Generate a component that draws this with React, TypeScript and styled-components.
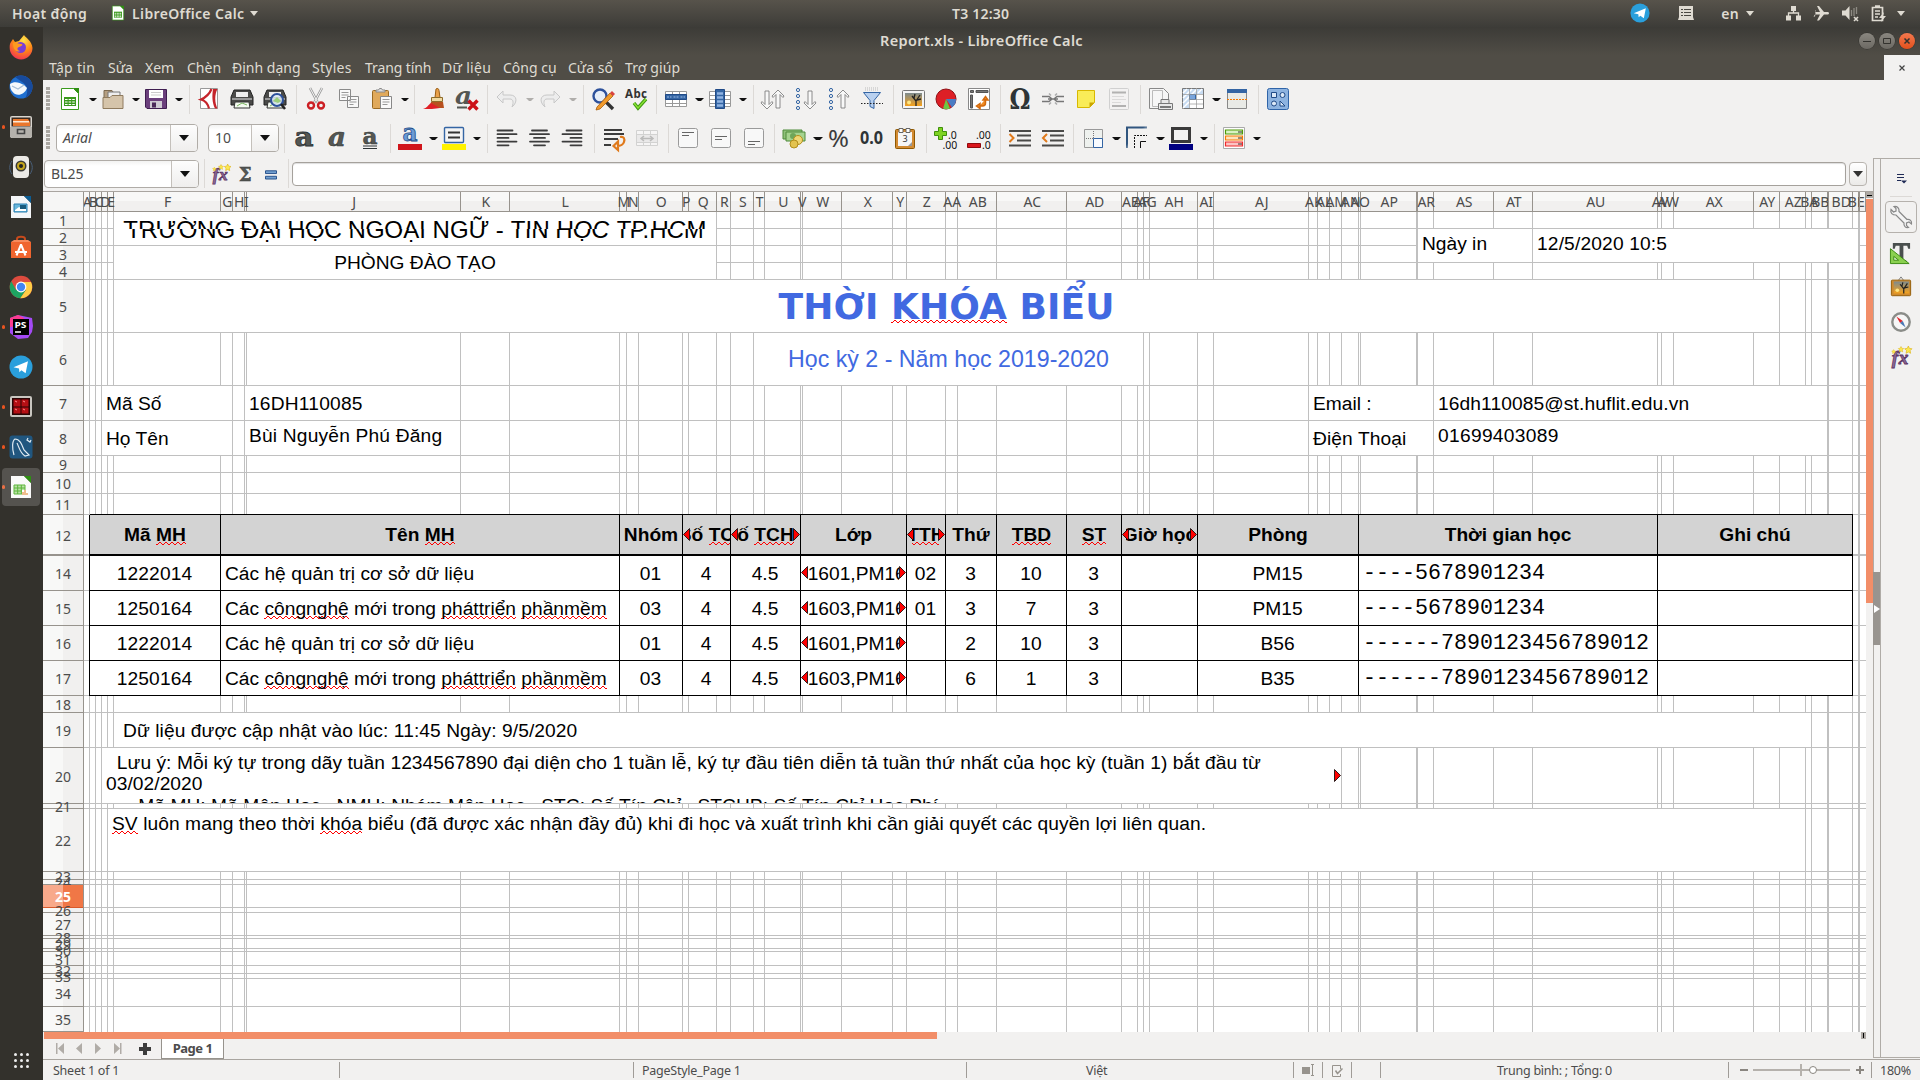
import React from "react";
import styled, { createGlobalStyle } from "styled-components";

const UI = `"Noto Sans", "Open Sans", sans-serif`;
const ARIAL = `"Liberation Sans", Arial, sans-serif`;
const MONO = `"Liberation Mono", "Courier New", monospace`;

const GlobalStyle = createGlobalStyle`
  * { box-sizing: border-box; }
  body { margin: 0; background: #f2f1f0; overflow: hidden; }
`;

/* ---------- icons ---------- */

const Sheet = ({ x = 3 }: { x?: number }) => (
  <>
    <path d={`M${x + 0.5} 1.5h12l5 5v16h-17z`} fill="#fff" stroke="#3a9a1c" />
    <path d={`M${x + 12} 1h6v6z`} fill="#2f8f12" />
    <path d={`M${x + 3} 10h12v9h-12z`} fill="#3a9a1c" />
    <path d={`M${x + 4} 12.5h10M${x + 4} 15h10M${x + 4} 17.5h10`} stroke="#fff" strokeWidth="1.2" strokeDasharray="2.6 1" />
  </>
);
const TableLines = () => (
  <>
    <path d="M1.500 4.500h21v15h-21z" fill="#fff" stroke="#999" />
    <path d="M1.500 8.500h21M1.500 12.500h21M1.500 16.500h21M8.500 4.500v15M15.500 4.500v15" stroke="#999" fill="none" />
  </>
);
const Lines = ({ a }: { a: "l" | "c" | "r" }) => (
  <g stroke="#3c3c3c" strokeWidth="1.8" strokeLinecap="round">
    {[16, 20, 12, 20, 12].map((w, i) => {
      const x = a === "l" ? 2.5 : a === "c" ? 12 - w / 2 : 21.500 - w;
      return <path key={i} d={`M${x} ${4.500 + i * 3.7}h${w - 1}`} />;
    })}
  </g>
);
const Box = ({ y }: { y: number }) => (
  <>
    <rect x="2.500" y="2.500" width="19" height="19" rx="2" fill="#f8f8f8" stroke="#9a9a9a" />
    <path d={`M6 ${y + 0.5}h12M6 ${y + 3.5}h7`} stroke="#666" />
  </>
);
const Printer = () => (
  <>
    <path d="M4 3h16l3 7v8H1v-8z" fill="#4a4a48" stroke="#222" />
    <path d="M6 5h12v5H6z" fill="#eee" />
    <path d="M2 11h20v2H2z" fill="#999" />
    <path d="M5 15h14l1 6H4z" fill="#f4faf0" stroke="#333" />
    <path d="M7 19l5-3 5 2" stroke="#7bb661" fill="none" />
  </>
);
const UpArrow = ({ x, down = false }: { x: number; down?: boolean }) => (
  <path
    transform={down ? `translate(${x} 23) scale(1 -1)` : `translate(${x} 2)`}
    d="M0 7l6-6 6 6-1 1.500-3-3v13.500h-4V5.500l-3 3z"
    fill="#f8f8f8"
    stroke="#808080"
    strokeWidth=".9"
  />
);
const Star = ({ x, y, r }: { x: number; y: number; r: number }) => (
  <path
    transform={`translate(${x} ${y}) scale(${r})`}
    d="M0-1l.3.65.7.1-.5.5.12.75L0 .65l-.62.35.12-.75-.5-.5.7-.1z"
    fill="#fce94f"
    stroke="#d8a800"
    strokeWidth=".15"
  />
);
const FxMark = () => (
  <>
    <text x="2" y="19.500" fontFamily="Liberation Serif, serif" fontStyle="italic" fontWeight="700" fontSize="21" fill="#8d6a94" stroke="#5c3566" strokeWidth=".9" textLength="18">fx</text>
    <Star x={4} y={6} r={2.2} />
    <Star x={12} y={3.5} r={3} />
    <Star x={20} y={4} r={4} />
  </>
);
const Photo = () => (
  <>
    <defs>
      <linearGradient id="sunset" x1="0" y1="0" x2="0" y2="1">
        <stop offset="0" stopColor="#7d8b8e" />
        <stop offset="1" stopColor="#f5a11c" />
      </linearGradient>
    </defs>
    <rect x="4" y="6" width="17" height="13" fill="url(#sunset)" />
    <circle cx="8" cy="15.500" r="2" fill="#ffe680" />
    <path d="M15 19v-5l-4-5M15 14l4-6M16 13l4-1M13 11l1-4" stroke="#222" strokeWidth="1.300" fill="none" />
  </>
);
const PaperPlane = () => <path d="M4.500 12.200L19 6.200 16.600 18.300l-4.200-3.100-2 2-.4-3.600z" fill="#fff" />;

const ICONS: Record<string, React.ReactNode> = {
  calc: <Sheet />,
  calcdock: (
    <>
      <path d="M2 1h13l7 7v15H2z" fill="#fafafa" />
      <path d="M15 1h7v7z" fill="#2f8f12" />
      <path d="M5 10h11v9H5z" fill="#b9e2a6" />
      <path d="M5 10h11v9H5zM5 13h11M5 16h11M8.700 10v9M12.300 10v9" stroke="#5cb53a" fill="none" />
      <path d="M13 15h6v5h-6z" fill="#fff" />
      <path d="M14 20v-3M16 20v-5M18 20v-2" stroke="#e07a1c" />
    </>
  ),
  open: (
    <>
      <path d="M3 3.500h8l2 3h5v14H3z" fill="#b59f82" stroke="#7d6a50" />
      <path d="M7 5h12v8H7z" fill="#eee" stroke="#777" />
      <path d="M2 10.500h7l2-2h11v13H2z" fill="#d5c4aa" stroke="#8f7b5e" />
    </>
  ),
  save: (
    <>
      <path d="M1.500 2.500h21v19H3l-1.500-1.500z" fill="#6b3f7c" stroke="#3f1d50" />
      <path d="M5 3h14v8H5z" fill="#fff" />
      <path d="M7 5.500h10M7 8h10" stroke="#ccc" />
      <path d="M6 14h12v7H6z" fill="#cfcbd3" />
      <path d="M8 15.500h4v5H8z" fill="#4b2a5a" />
    </>
  ),
  pdf: (
    <>
      <path d="M3.500 1.500h17v20h-17z" fill="#fff" stroke="#999" />
      <path d="M16 2h4.500c-3 5-3 14 0 19.500h-2.500c-3-6-3-13-2-19.500z" fill="#c5242b" />
      <path d="M14.500 2c-2 5-5 8-10.500 10.500 4 1 7 5 8 9" stroke="#c5242b" strokeWidth="2.200" fill="none" />
    </>
  ),
  print: <Printer />,
  preview: (
    <>
      <Printer />
      <circle cx="14" cy="13" r="6" fill="#dce9f5" fillOpacity=".85" stroke="#2d519b" strokeWidth="2" />
      <path d="M18 17l4 5" stroke="#222" strokeWidth="2.500" />
      <path d="M10 14l4-4 4 4-3 2z" fill="#9bcf7b" />
    </>
  ),
  cut: (
    <>
      <path d="M6 1l8 15M18 1l-8 15" stroke="#999" strokeWidth="2.600" />
      <path d="M6 1l8 15M18 1l-8 15" stroke="#f5f5f5" strokeWidth="1" />
      <circle cx="7" cy="18.500" r="3" fill="none" stroke="#cc1f24" strokeWidth="2.400" />
      <circle cx="17" cy="18.500" r="3" fill="none" stroke="#cc1f24" strokeWidth="2.400" />
    </>
  ),
  copy: (
    <>
      <path d="M2.500 2.500h11v11h-11zM10.500 9.500h11v11h-11z" fill="#f9f9f9" stroke="#8a8a8a" />
      <path d="M4.500 5.500h7M4.500 8h7M4.500 10.500h4M12.500 12.500h7M12.500 15h7M12.500 17.500h4" stroke="#999" />
    </>
  ),
  paste: (
    <>
      <rect x="2.500" y="3.500" width="16" height="18" rx="1" fill="#e0a95b" stroke="#9a6a22" />
      <path d="M6 5V3h2.500l1-1.500h2l1 1.500H15v2z" fill="#ddd" stroke="#888" />
      <path d="M10.500 9.500h11v12h-11z" fill="#fafafa" stroke="#888" />
      <path d="M12.500 12.500h7M12.500 15h7M12.500 17.500h5" stroke="#999" />
    </>
  ),
  brush: (
    <>
      <path d="M14 2c1-1 3-.5 3 1.500l1 7h-5z" fill="#e9a14a" stroke="#9a5c12" />
      <path d="M9.500 10.500h11v4h-11z" fill="#f0d9a0" stroke="#8f6c2a" />
      <path d="M9 15h12l1 6H8z" fill="#b8501e" />
      <path d="M1 22c4-1 5-4 8-6l9 5c-5 1-11 1-17 1z" fill="#e01f26" />
    </>
  ),
  clear: (
    <>
      <text x="0" y="17" fontFamily="DejaVu Serif, serif" fontStyle="italic" fontWeight="700" fontSize="25" fill="#555753" textLength="17" lengthAdjust="spacingAndGlyphs">a</text>
      <path d="M2 20.500h10" stroke="#555753" strokeWidth="2" />
      <path d="M13.500 13.500l9 9M22.500 13.500l-9 9" stroke="#cc1118" strokeWidth="3.400" />
    </>
  ),
  undo: <path d="M8 4L2 10l6 6v-4h7c3 0 4 3 2 8 6-5 5-12-2-12H8z" fill="#ededed" stroke="#c8c8c8" />,
  redo: <path d="M16 4l6 6-6 6v-4H9c-3 0-4 3-2 8-6-5-5-12 2-12h7z" fill="#ededed" stroke="#c8c8c8" />,
  find: (
    <>
      <circle cx="9" cy="9" r="6.500" fill="#e6eef8" stroke="#2d519b" strokeWidth="2.400" />
      <path d="M14 14l8 8" stroke="#333" strokeWidth="3.400" />
      <path d="M6 20L19 6l3 3L9 22l-4 1z" fill="#f09a2c" stroke="#a85d0c" strokeWidth=".8" />
      <path d="M19 6l2-2 3 3-2 2z" fill="#d9433f" />
    </>
  ),
  spell: (
    <>
      <text x="1" y="10.500" fontFamily="Noto Sans, sans-serif" fontWeight="700" fontSize="11.500" fill="#333" textLength="22">Abc</text>
      <path d="M10 16l4 5 8-9" stroke="#3f9a11" strokeWidth="3.400" fill="none" />
      <path d="M10 16l4 5 8-9" stroke="#8ae234" strokeWidth="1.400" fill="none" />
    </>
  ),
  row: (
    <>
      <TableLines />
      <path d="M1.500 7.500h21v5h-21z" fill="#3465a4" stroke="#204a87" />
      <path d="M3 10h4.500M9.500 10h5M16.500 10h4.500" stroke="#9dbde6" strokeDasharray="2 1" />
    </>
  ),
  col: (
    <>
      <TableLines />
      <path d="M7.500 2.500h9v19h-9z" fill="#3465a4" stroke="#204a87" />
      <path d="M9 6.500h6M9 10.500h6M9 14.500h6M9 18.500h6" stroke="#8fb3e2" strokeWidth="2.400" />
    </>
  ),
  sort: (
    <>
      <UpArrow x={0} down />
      <UpArrow x={11} />
    </>
  ),
  asc: (
    <>
      <g fill="none" stroke="#3465a4">{[3, 9, 15, 21].map((y) => <circle key={y} cx="4" cy={y} r="1.600" />)}</g>
      <UpArrow x={10} down />
    </>
  ),
  desc: (
    <>
      <g fill="none" stroke="#3465a4">{[3, 9, 15, 21].map((y) => <circle key={y} cx="4" cy={y} r="1.600" />)}</g>
      <UpArrow x={10} />
    </>
  ),
  filter: (
    <>
      <path d="M5 1h14M5 3h14" stroke="#bbb" strokeDasharray="1 1" />
      <path d="M3.500 5.500h17l-6.500 8v8l-4-2v-6z" fill="#b8d0ef" stroke="#3465a4" />
      <path d="M1 16.500h22" stroke="#222" strokeDasharray="1.500 1.500" />
    </>
  ),
  image: (
    <>
      <rect x="1.500" y="3.500" width="22" height="18" rx="1" fill="#f4f4f4" stroke="#777" />
      <Photo />
    </>
  ),
  chart: (
    <>
      <circle cx="12" cy="12" r="10" fill="#dd1f26" stroke="#8f1014" />
      <path d="M12 12h10a10 10 0 0 1-4 8.500z" fill="#4a7cc4" />
      <path d="M12 12l4 9.500a10 10 0 0 1-7 0z" fill="#6cc644" />
    </>
  ),
  pivot: (
    <>
      <path d="M1.500 1.500h21v21h-21z" fill="#fff" stroke="#888" />
      <path d="M3.500 3.500h3v2h-3zM9 3.500h12v2H9zM3.500 8h2v13h-2z" fill="#777" stroke="#555" />
      <path d="M18.500 12v4c0 2-1 3-3 3h-3M16 13l2.500-3.500L21 13zM13 16.500L9.500 19l3.500 2.500z" fill="#f08c24" stroke="#d46a0c" strokeWidth="1.500" />
    </>
  ),
  omega: <text x="1.500" y="21.500" fontFamily="DejaVu Serif, serif" fontWeight="700" fontSize="27" fill="#2e3436" textLength="21" lengthAdjust="spacingAndGlyphs">Ω</text>,
  link: (
    <g fill="none" stroke="#777" strokeWidth="1.500">
      <path d="M1 9.500h7l3 2.500-3 2.500H1M23 9.500h-7l-3 2.500 3 2.500h7M7 12h10" />
      <path d="M8 6.500l2 2M16 6.500l-2 2M8 17.500l2-2M16 17.500l-2-2" stroke="#aaa" />
    </g>
  ),
  note: (
    <>
      <path d="M3.500 3.500h17v12l-5 5h-12z" fill="#f9ec58" stroke="#d8b800" />
      <path d="M20.500 15.500h-5v5z" fill="#c9a400" />
    </>
  ),
  header: (
    <g opacity=".6">
      <rect x="2.500" y="1.500" width="19" height="21" rx="1" fill="#f4f4f4" stroke="#bbb" />
      <path d="M5 5.500h14M5 19h14" stroke="#888" strokeWidth="2" />
      <path d="M5 9.500h12M5 12.500h14M5 15.500h9" stroke="#ccc" />
    </g>
  ),
  printarea: (
    <>
      <path d="M1.500 1.500h14l5 5v15h-19z" fill="#f6f6f6" stroke="#888" />
      <path d="M4.500 3.500h10v16h-10z" fill="none" stroke="#bbb" />
      <path d="M13 12.500h8v4h-8zM10.500 16.500h14v6h-14z" fill="#e8e8e8" stroke="#777" />
      <path d="M12 20h11" stroke="#555" strokeWidth="1.500" />
    </>
  ),
  freeze: (
    <>
      <path d="M1.500 1.500h21v20h-21z" fill="#fff" stroke="#777" />
      <path d="M2 2h20v5H8v14H2z" fill="#c8dcf2" />
      <path d="M2 6l4-4M2 11l9-9M2 16L16 2M2 21l6-6M12 6l4-4M17 6l4-4" stroke="#fff" strokeWidth="1.500" />
      <path d="M8.500 7.500h6v5h-6z" fill="#7aa5dc" stroke="#3465a4" />
      <path d="M8.500 2v19M15.500 2v19M2 7.500h20M8.500 12.500H22M8.500 17H22" stroke="#999" strokeOpacity=".7" fill="none" />
    </>
  ),
  split: (
    <>
      <path d="M2.500 2.500h19v19h-19z" fill="#e9eae6" stroke="#888" />
      <path d="M2 2h20v4H2z" fill="#3465a4" />
      <path d="M2 12.500h20" stroke="#f57900" strokeDasharray="2 1" />
    </>
  ),
  draw: (
    <>
      <rect x="1.500" y="1.500" width="21" height="21" rx="2" fill="#8db3e0" stroke="#2f64a8" />
      <g fill="#dce9f7" stroke="#204a87">
        <path d="M5.500 5.500h5v5h-5zM14 19V14l5 5z" />
        <circle cx="16.500" cy="8" r="2.500" />
        <circle cx="8" cy="16.500" r="2.500" />
      </g>
    </>
  ),
  bold: <text x="2.500" y="19.500" fontFamily="DejaVu Serif, serif" fontWeight="700" fontSize="26" fill="#555753" stroke="#2e3436" strokeWidth=".8" textLength="19" lengthAdjust="spacingAndGlyphs">a</text>,
  italic: <text x="3" y="19.500" fontFamily="DejaVu Serif, serif" fontWeight="700" fontStyle="italic" fontSize="26" fill="#555753" stroke="#2e3436" strokeWidth=".5" textLength="18" lengthAdjust="spacingAndGlyphs">a</text>,
  under: (
    <>
      <text x="4.500" y="18" fontFamily="DejaVu Serif, serif" fontWeight="700" fontSize="23" fill="#555753" stroke="#2e3436" strokeWidth=".5" textLength="15" lengthAdjust="spacingAndGlyphs">a</text>
      <path d="M5 20h14M5 22.500h14" stroke="#2e3436" strokeWidth="1.200" />
    </>
  ),
  fontcolor: (
    <>
      <text x="4.500" y="15" fontFamily="DejaVu Serif, serif" fontWeight="700" fontSize="25" fill="#6b9bd6" stroke="#204a87" strokeWidth=".8" textLength="15" lengthAdjust="spacingAndGlyphs">a</text>
      <path d="M0 18h24v6H0z" fill="#d0151b" />
    </>
  ),
  highlight: (
    <>
      <rect x="2.500" y="1.500" width="19" height="15" rx="1" fill="#f4f4f4" stroke="#3465a4" strokeWidth="1.400" />
      <path d="M6 6.500h12M6 11.500h12" stroke="#333" strokeWidth="2" />
      <path d="M0 18h24v6H0z" fill="#fff200" />
    </>
  ),
  left: <Lines a="l" />,
  center: <Lines a="c" />,
  right: <Lines a="r" />,
  wrap: (
    <>
      <path d="M2 4h18M2 8h20M2 13h14M2 19h7" stroke="#3c3c3c" strokeWidth="2" />
      <path d="M18 11c4-1 5 2 4 5s-4 4-7 4M16 15.500L11.500 20l4.500 4z" fill="none" stroke="#e07a1c" strokeWidth="2.200" />
    </>
  ),
  merge: (
    <g opacity=".35">
      <TableLines />
      <path d="M2 9h20v7H2z" fill="#ddd" />
      <path d="M6 12.500h12M9 10l-3 2.500L9 15M15 10l3 2.500L15 15" stroke="#555" strokeWidth="1.500" fill="none" />
    </g>
  ),
  vtop: <Box y={6} />,
  vmid: <Box y={10} />,
  vbot: <Box y={15} />,
  currency: (
    <>
      <path d="M1 4h19v9H1z" fill="#8fc07a" stroke="#4e8a3a" />
      <path d="M4 6h19v9H4z" fill="#a5d38f" stroke="#4e8a3a" />
      <circle cx="11" cy="10" r="3" fill="#6fa659" />
      <circle cx="16" cy="14" r="4.500" fill="#f0d774" stroke="#b28f1c" />
      <circle cx="12" cy="18" r="4" fill="#e3c34f" stroke="#b28f1c" />
    </>
  ),
  percent: <text x="1" y="20.500" fontFamily="Noto Sans, sans-serif" fontSize="23" fill="#3c3c3c" textLength="21" lengthAdjust="spacingAndGlyphs">%</text>,
  number: <text x="0" y="17.500" fontFamily="Noto Sans, sans-serif" fontWeight="700" fontSize="17" fill="#2e3436" textLength="23" lengthAdjust="spacingAndGlyphs">0.0</text>,
  date: (
    <>
      <rect x="2.500" y="3.500" width="19" height="19" rx="1" fill="#d38b33" stroke="#8f5902" />
      <path d="M5 6h14v14H5z" fill="#f6f6f6" />
      <path d="M6 2.500h4v4H6zM13 2.500h4v4h-4z" fill="#fff" stroke="#666" />
      <text x="9.500" y="16" fontFamily="Noto Sans, sans-serif" fontSize="9" fill="#333">3</text>
      <path d="M19 16v4h-4z" fill="#999" />
    </>
  ),
  adddec: (
    <>
      <path d="M4.500 1.500h4v4h4v4h-4v4h-4v-4h-4v-4h4z" fill="#7ed321" stroke="#3f8f0a" />
      <text x="14" y="13" fontFamily="Noto Sans, sans-serif" fontSize="10.500" fill="#111">.0</text>
      <text x="8.500" y="23" fontFamily="Noto Sans, sans-serif" fontSize="10.500" fill="#111">.00</text>
    </>
  ),
  deldec: (
    <>
      <text x="9" y="13" fontFamily="Noto Sans, sans-serif" fontSize="10.500" fill="#111">.00</text>
      <text x="15" y="23" fontFamily="Noto Sans, sans-serif" fontSize="10.500" fill="#111">.0</text>
      <path d="M.5 17.500h13v4H.5z" fill="#d9151b" stroke="#8f0a0e" />
    </>
  ),
  indent: (
    <>
      <path d="M1 5h22M9 9.500h14M9 14.500h14M1 19.500h22" stroke="#4a4a48" strokeWidth="2.200" />
      <path d="M1.500 8l4 4-4 4" stroke="#e07a1c" strokeWidth="2" fill="none" />
    </>
  ),
  outdent: (
    <>
      <path d="M1 5h22M9 9.500h14M9 14.500h14M1 19.500h22" stroke="#4a4a48" strokeWidth="2.200" />
      <path d="M6 8l-4 4 4 4" stroke="#e07a1c" strokeWidth="2" fill="none" />
    </>
  ),
  borders: (
    <>
      <path d="M3.500 3.500h18v18h-18z" fill="#eef1ee" stroke="#999" />
      <path d="M12.500 5v7M5 12.500h7" stroke="#777" strokeDasharray="1 1" />
      <path d="M12.500 12.500h9v9h-9z" fill="#f8fbff" stroke="#3465a4" />
    </>
  ),
  bstyle: (
    <>
      <defs>
        <linearGradient id="fade" x1="0" y1="0" x2="1" y2="1">
          <stop offset=".4" stopColor="#31567f" />
          <stop offset=".7" stopColor="#31567f" stopOpacity="0" />
        </linearGradient>
      </defs>
      <path d="M2 22V1.500h20" fill="none" stroke="url(#fade)" strokeWidth="2" />
      <path d="M9.500 22V9.500H22" fill="none" stroke="#111" strokeDasharray="2 1" />
      <path d="M15.500 22v-6.500H21" fill="none" stroke="#111" />
    </>
  ),
  bcolor: (
    <>
      <path d="M3.500 2.500h17v13h-17z" fill="#f2f2f2" stroke="#3a3a3a" strokeWidth="3" />
      <path d="M0 18h24v6H0z" fill="#000080" />
    </>
  ),
  cond: (
    <>
      <path d="M1.500 1.500h21v21h-21z" fill="#fff" stroke="#aaa" />
      <path d="M3.500 4h17v4h-17z" fill="#d9f2c4" stroke="#4e9a06" strokeWidth="1.200" />
      <path d="M3.500 10h17v4h-17z" fill="#fde3bd" stroke="#f57900" strokeWidth="1.200" />
      <path d="M3.500 16h17v4h-17z" fill="#fbc4c4" stroke="#ef2929" strokeWidth="1.200" />
      <path d="M16 6h4M16 12h4M16 18h4" stroke="#333" />
    </>
  ),
  fx: <FxMark />,
  sigma: <text x="4" y="20" fontFamily="DejaVu Serif, serif" fontWeight="700" fontSize="20" fill="#555753" stroke="#2e3436" strokeWidth=".4">Σ</text>,
  equals: <path d="M6 8.500h12v3H6zM6 14.500h12v3H6z" fill="#729fcf" stroke="#204a87" />,
  sidemenu: (
    <>
      <path d="M8 8.500h7M8 11.500h7M8 14.500h4" stroke="#1f2a55" strokeWidth="1.200" />
      <path d="M12 14.500h6l-3 3z" fill="#1f2a55" />
    </>
  ),
  wrench: (
    <path
      d="M5 1.500c3-.5 5.500 1.500 5 5l8 8c3-.5 5 1.500 4.500 4.500l-2.500-2-2.500 1v2.500l2 2c-3 .500-5-1.500-4.500-4.500l-8-8c-3.500 0-6-2-5-5.500l2.500 2.500 2.500-1V3.500z"
      fill="#f4f4f4"
      stroke="#888"
      strokeWidth="1.200"
    />
  ),
  styles: (
    <>
      <path d="M4 1h18v6h-2l-1-3h-4v15h3v2H8v-2h3V4H7L6 7H4z" fill="#4a4f4e" />
      <path d="M1.500 7v15.500H21z" fill="#8ad04f" stroke="#3c8a12" />
      <path d="M5 15v4h5z" fill="#eaf7df" stroke="#3c8a12" />
    </>
  ),
  gallery: (
    <>
      <path d="M9 5l3-4 3 4" fill="none" stroke="#777" />
      <rect x="1.500" y="4.500" width="21" height="17" rx="1" fill="#cf8a2e" stroke="#8f5902" />
      <Photo />
    </>
  ),
  compass: (
    <>
      <circle cx="12" cy="12" r="9.500" fill="#f6f6f6" stroke="#8a8c88" strokeWidth="2.600" />
      <path d="M7 6l7 5-3 2z" fill="#e0242a" />
      <path d="M17 18l-6-5 3-2z" fill="#4a78b5" />
    </>
  ),
  firefox: (
    <>
      <defs>
        <radialGradient id="ff" cx=".6" cy=".2" r=".9">
          <stop offset="0" stopColor="#ffe14a" />
          <stop offset=".5" stopColor="#ff8a16" />
          <stop offset="1" stopColor="#f0245e" />
        </radialGradient>
      </defs>
      <path d="M2 7l2-3 2 3 4-1 5-6c2 3 8 6 8.500 13a11.300 11.300 0 0 1-22.800 0c0-3 0-4 1.300-6z" fill="url(#ff)" />
      <circle cx="11.500" cy="12.500" r="5.500" fill="#7a3fd6" />
      <path d="M4 8c4-1 6 1 8 1s2 2-2 3c-3 1-1 4 1 4-4 2-7-2-7-8z" fill="#ff9a1f" />
    </>
  ),
  thunderbird: (
    <>
      <circle cx="12" cy="12" r="11.500" fill="#1f6fd0" />
      <path d="M6 2c8-4 17 1 17.500 9 0 6-3 10-7 12 3-6 2-12-2-15z" fill="#174a9c" />
      <path d="M1 9c4-3 9-2 14 1l3 3c-2 6-8 8-12 6-3-2-5-5-5-10z" fill="#f4f8fc" />
      <path d="M3 11l6 3 6-4" fill="none" stroke="#a7bed6" strokeWidth="1.200" />
    </>
  ),
  files: (
    <>
      <rect x="1" y="1" width="22" height="22" rx="2" fill="#d9d6d0" />
      <path d="M2.500 2.500h19v9h-19z" fill="#3a2a20" />
      <path d="M4 4h15l2 3v4H4z" fill="#e9762b" />
      <path d="M4 6h16v1.500H4z" fill="#fbe9d6" />
      <path d="M1 12h22v9l-2 2H3l-2-2z" fill="#b5b2ac" />
      <path d="M8.500 14.500h7v4h-7z" fill="none" stroke="#444" strokeWidth="1.600" />
    </>
  ),
  rhythmbox: (
    <>
      <rect x="4" y="1" width="16" height="22" rx="4" fill="#eceae6" />
      <path d="M3 6c-3 4-3 9 0 13M21 6c3 4 3 9 0 13" stroke="#4a607a" fill="none" />
      <circle cx="12" cy="11" r="5.500" fill="#3b3b36" />
      <circle cx="12" cy="11" r="4" fill="#c4a51c" />
      <circle cx="12" cy="11" r="2" fill="#222" />
    </>
  ),
  impress: (
    <>
      <path d="M2 1h13l7 7v15H2z" fill="#f4f6f8" />
      <path d="M15 1h7v7z" fill="#0d5d93" />
      <path d="M5 9h13v8H5z" fill="#69b7dc" stroke="#2a7fb0" />
      <path d="M6 15l4-3 4 2 3-2v4H6z" fill="#fff" />
      <path d="M11 10h6v4h-6z" fill="#195a7c" />
    </>
  ),
  software: (
    <>
      <path d="M8 7V4c0-3 8-3 8 0v3" fill="none" stroke="#c74a1c" strokeWidth="2" />
      <path d="M2 7h20v16H2z" fill="#f0652f" />
      <path d="M2 7l3-2h14l3 2z" fill="#f78a5c" />
      <path d="M12 9.500l-4.500 11M12 9.500l4.500 11M6 17h12" stroke="#fff" strokeWidth="2" fill="none" />
    </>
  ),
  chrome: (
    <>
      <circle cx="12" cy="12" r="11.300" fill="#dd4b3e" />
      <path d="M2.300 6.200a11.300 11.300 0 0 0 9 17.100L17 15H7z" fill="#1da462" />
      <path d="M22 7H12l5 8-5.700 8.300A11.300 11.300 0 0 0 22 7z" fill="#ffcd46" />
      <circle cx="12" cy="12" r="5.400" fill="#fff" />
      <circle cx="12" cy="12" r="4.200" fill="#4285f4" />
    </>
  ),
  phpstorm: (
    <>
      <path d="M1 3l8-3 14 3 1 8-1 6-4 6-10 1-8-6z" fill="#a44af5" />
      <path d="M1 3l8-3 6 3-4 8-10 1z" fill="#fb3c8f" />
      <path d="M4 4h16v16H4z" fill="#000" />
      <text x="5.500" y="12.500" fontFamily="Noto Sans, sans-serif" fontWeight="700" fontSize="9" fill="#fff" textLength="12" lengthAdjust="spacingAndGlyphs">PS</text>
      <path d="M6 17h6" stroke="#fff" strokeWidth="1.500" />
    </>
  ),
  telegram: (
    <>
      <circle cx="12" cy="12" r="11.500" fill="#2a9fdc" />
      <PaperPlane />
    </>
  ),
  terminator: (
    <>
      <rect x="1" y="1" width="22" height="21" rx="2" fill="#c9c6c0" />
      <path d="M3 3h18v17H3z" fill="#2a0505" />
      <path d="M4.500 4.500h7v7h-7zM12.500 4.500h7v7h-7zM4.500 12.500h7v6h-7zM12.500 12.500h7v6h-7z" fill="#b50f14" />
      <path d="M6 6l2 1M14 6l2 1M6 14l2 1M14 14l2 1" stroke="#ff8a8a" />
    </>
  ),
  workbench: (
    <>
      <rect x=".5" y=".5" width="23" height="23" rx="3" fill="#20567f" />
      <path d="M5 20c-2-7-2-14 1-16 5 0 7 6 9 11l5 5-4 1c-5-3-6-9-8-13M19 3l-1 2 3 2 1-2" stroke="#dfeaf2" fill="none" strokeWidth="1.200" />
    </>
  ),
};

const Svg = styled.svg<{ $s: number }>`
  display: block;
  flex: none;
  overflow: visible;
  width: ${(p) => p.$s}px;
  height: ${(p) => p.$s}px;
`;
const Icon = ({ name, size = 24 }: { name: string; size?: number }) => (
  <Svg $s={size} viewBox="0 0 24 24">{ICONS[name]}</Svg>
);

const Caret = styled.i<{ $w: number; $h: number; $c: string }>`
  display: block;
  border: solid transparent;
  border-width: ${(p) => p.$h}px ${(p) => p.$w / 2}px 0;
  border-top-color: ${(p) => p.$c};
`;

/* ---------- shell ---------- */

const Screen = styled.div`
  width: 1920px;
  height: 1080px;
  display: flex;
  flex-direction: column;
  font-family: ${UI};
  background: #f2f1f0;
  color: #4c4c4c;
`;
const TopBar = styled.header`
  height: 27px;
  padding-bottom: 1px;
  display: grid;
  grid-template-columns: 1fr 58px 910px;
  align-items: center;
  background: linear-gradient(#57534b, #3d3c38);
  color: #dfdbd2;
  font-size: 14px;
  font-weight: 600;
  letter-spacing: 0.35px;
`;
const Clock = styled.span`
  white-space: nowrap;
  letter-spacing: 0.2px;
`;
const TopLeft = styled.div`
  display: flex;
  align-items: center;
  padding-left: 12px;
  gap: 6px;
  & > svg { margin-left: 17px; }
`;
const TopRight = styled.div`
  display: flex;
  align-items: center;
  justify-content: flex-end;
  padding-right: 15px;
`;
const Tray = styled.div<{ $ml: number }>`
  display: flex;
  align-items: center;
  gap: 7px;
  margin-left: ${(p) => p.$ml}px;
`;
const Body = styled.div`
  flex: 1;
  display: flex;
  min-height: 0;
`;
const Dock = styled.nav`
  width: 43px;
  background: #33312c;
  display: flex;
  flex-direction: column;
  align-items: center;
`;
const DockItem = styled.div`
  width: 43px;
  height: 40px;
  padding-left: 2px;
  display: grid;
  grid-template-columns: 3px 1fr;
  align-items: center;
`;
const Dot = styled.i<{ $on: boolean }>`
  width: 3px;
  height: 4px;
  border-radius: 2px;
  background: ${(p) => (p.$on ? "#e95420" : "transparent")};
`;
const DockTile = styled.div<{ $active: boolean }>`
  height: 38px;
  width: 38px;
  margin-left: -3px;
  border-radius: 4px;
  display: flex;
  align-items: center;
  justify-content: center;
  background: ${(p) => (p.$active ? "rgba(255,255,255,.17)" : "transparent")};
`;
const AppGrid = styled.div`
  margin-top: auto;
  margin-bottom: 12px;
  display: grid;
  grid-template-columns: repeat(3, 3px);
  gap: 3px;
  & > i { width: 3px; height: 3px; border-radius: 2px; background: #eee; }
`;
const Window = styled.main`
  flex: 1;
  display: flex;
  flex-direction: column;
  min-width: 0;
`;
const TitleBar = styled.div`
  height: 28px;
  display: grid;
  grid-template-columns: 1fr auto 1fr;
  align-items: center;
  background: linear-gradient(#3c3b37, #504d46);
  color: #dfdbd2;
  font-size: 14.500px;
  font-weight: 600;
`;
const Title = styled.span`
  grid-column: 2;
  padding-bottom: 2px;
  letter-spacing: 0.300px;
`;
const WinButtons = styled.div`
  display: flex;
  gap: 4px;
  justify-content: flex-end;
  padding-right: 5px;
`;
const WinButton = styled.span<{ $close?: boolean }>`
  width: 16px;
  height: 16px;
  border-radius: 8px;
  display: flex;
  align-items: center;
  justify-content: center;
  background: ${(p) => (p.$close ? "linear-gradient(#f4784e,#e2501c)" : "linear-gradient(#8a8780,#6c6963)")};
  box-shadow: 0 0 0 0.500px #33322e;
`;
const MenuBar = styled.div`
  height: 25px;
  display: flex;
  align-items: center;
  padding-left: 6px;
  background: #504d46;
  color: #dfdbd2;
  font-size: 14px;
`;
const MenuItem = styled.span<{ $w: number; $ls: number }>`
  width: ${(p) => p.$w}px;
  letter-spacing: ${(p) => p.$ls}px;
  white-space: nowrap;
`;
const CloseDoc = styled.span`
  margin-left: auto;
  width: 36px;
  height: 25px;
  background: #f2f1f0;
  display: flex;
  align-items: center;
  justify-content: center;
`;

/* ---------- toolbars ---------- */

const Toolbar = styled.div<{ $h: number }>`
  height: ${(p) => p.$h}px;
  display: flex;
  align-items: center;
`;
const Handle = styled.i<{ $mr: number }>`
  width: 4px;
  height: 24px;
  margin-left: 3px;
  margin-right: ${(p) => p.$mr}px;
  background: repeating-linear-gradient(#aaa7a2 0 3px, transparent 3px 4px);
`;
const Slot = styled.span`
  width: 33px;
  display: flex;
  justify-content: center;
`;
const ArrowSlot = styled.span<{ $w: number }>`
  width: ${(p) => p.$w}px;
  padding-left: 2.500px;
`;
const SepSlot = styled.span<{ $w: number }>`
  width: ${(p) => p.$w}px;
  height: 29px;
  display: flex;
  justify-content: flex-end;
  padding-right: 3px;
  &::after { content: ""; width: 1px; background: #dcd9d6; }
`;
type Tool = string | number;
/* Strings are icon names ("v11" is a drop-down arrow 11px wide), numbers are separators of that width. */
const Tools = ({ items }: { items: Tool[] }) => (
  <>
    {items.map((t, i) => {
      if (typeof t === "number") return <SepSlot key={i} $w={t} />;
      if (/^[vg]\d+$/.test(t))
        return (
          <ArrowSlot key={i} $w={+t.slice(1)}>
            <Caret $w={6} $h={3.5} $c={t[0] === "g" ? "#b0aeab" : "#111"} />
          </ArrowSlot>
        );
      return <Slot key={i}><Icon name={t} /></Slot>;
    })}
  </>
);
const ROW1: Tool[] = ["calc", "v10", "open", "v10", "save", "v10", 10, "pdf", "print", "preview", 8, "cut", "copy", "paste", "v10", 9, "brush", "clear", 7, "undo", "g10", "redo", "g10", 10, "find", "spell", 7, "row", "v11", "col", "v10", 10, "sort", "asc", "desc", "filter", 8, "image", "chart", "pivot", 8, "omega", "link", "note", "header", 8, "printarea", "freeze", "v11", "split", 8, "draw"];
const ROW2: Tool[] = ["bold", "italic", "under", 7, "fontcolor", "v11", "highlight", "v10", 10, "left", "center", "right", 8, "wrap", "merge", 8, "vtop", "vmid", "vbot", 7, "currency", "v12", "percent", "number", "date", 8, "adddec", "deldec", 8, "indent", "outdent", 7, "borders", "v11", "bstyle", "v11", "bcolor", "v10", 10, "cond", "v10"];

const Combo = styled.div<{ $w: number; $italic?: boolean }>`
  width: ${(p) => p.$w}px;
  height: 28px;
  display: flex;
  border: 1px solid #b0aca7;
  border-radius: 4px;
  overflow: hidden;
  background: linear-gradient(#f3f3f2, #fff 5px);
  font-size: 14px;
  font-style: ${(p) => (p.$italic ? "italic" : "normal")};
  line-height: 26px;
  padding-left: 6px;
`;
const ComboArrow = styled.span`
  margin-left: auto;
  width: 27px;
  border-left: 1px solid #c4c0bb;
  background: linear-gradient(#fdfdfd, #efeeed);
  display: flex;
  align-items: center;
  justify-content: center;
`;
const Gap = styled.span<{ $w: number }>`
  width: ${(p) => p.$w}px;
`;
const Work = styled.div`
  flex: none;
  height: 901px;
  display: flex;
`;
const Main = styled.div`
  width: 1830px;
  display: flex;
  flex-direction: column;
`;
const FormulaBar = styled.div`
  height: 34px;
  padding: 1px 0 3px 1px;
  display: flex;
  align-items: center;
  border-bottom: 1px solid #a9a5a0;
`;
const FormulaInput = styled.div`
  width: 1554px;
  height: 24px;
  border: 1px solid #a5a19c;
  border-radius: 4px;
  background: #fff;
  box-shadow: inset 0 1px 1px #ddd;
`;
const FormulaDrop = styled.div`
  width: 18px;
  height: 24px;
  margin-left: 3px;
  border: 1px solid #b8b4af;
  border-radius: 4px;
  background: linear-gradient(#fff, #ebeae8);
  display: flex;
  align-items: center;
  justify-content: center;
`;
const MiniSlot = styled.span`
  width: 25px;
  display: flex;
  justify-content: center;
`;

/* ---------- spreadsheet ---------- */

const COLS: [string, number][] = [
  ["A", 6], ["B", 6], ["C", 6], ["D", 6], ["E", 6], ["F", 107], ["G", 12], ["H", 12], ["I", 2], ["J", 214], ["K", 49], ["L", 110],
  ["M", 7], ["N", 12], ["O", 44], ["P", 6], ["Q", 28], ["R", 14], ["S", 23], ["T", 11], ["U", 36], ["V", 2], ["W", 39], ["X", 51],
  ["Y", 14], ["Z", 39], ["AA", 12], ["AB", 39], ["AC", 70], ["AD", 55], ["AE", 16], ["AF", 6], ["AG", 6], ["AH", 48], ["AI", 16],
  ["AJ", 95], ["AK", 9], ["AL", 12], ["AM", 12], ["AN", 17], ["AO", 2], ["AP", 56], ["AQ", 1], ["AR", 16], ["AS", 60], ["AT", 39],
  ["AU", 125], ["AV", 4], ["AW", 12], ["AX", 80], ["AY", 26], ["AZ", 26], ["BA", 6], ["BB", 16], ["BC", 1], ["BD", 24], ["BE", 6], ["BF", 1], ["BG", 6],
];
const ROWS = [17, 17, 17, 17, 53, 53, 35, 35, 17, 21, 21, 40, 1, 35, 35, 35, 35, 17, 35, 56, 5, 63, 8, 5, 23, 5, 23, 3, 10, 3, 14, 8, 5, 28, 25];
const colIndex = (n: string) => COLS.findIndex((c) => c[0] === n) + 1;
const COL_TRACKS = COLS.map((c) => c[1] + "px").join(" ");
const ROW_TRACKS = ROWS.map((r) => r + "px").join(" ");

const SheetArea = styled.div`
  height: 840px;
  display: flex;
`;
const SheetBox = styled.div`
  width: 1823px;
  display: grid;
  grid-template-columns: 41px 1782px;
  grid-template-rows: 20px 820px;
`;
const Corner = styled.div`
  border-right: 1px solid #97938d;
  border-bottom: 1px solid #97938d;
  background: #f6f6f5;
`;
const ColHeads = styled.div`
  display: grid;
  grid-template-columns: ${COL_TRACKS};
  background: linear-gradient(#f8f8f7 50%, #f1f0ef 50%);
  border-bottom: 1px solid #97938d;
  overflow: hidden;
`;
const ColHead = styled.div`
  display: flex;
  justify-content: center;
  border-right: 1px solid #97938d;
  font-size: 14px;
  line-height: 20px;
  text-indent: 1.500px;
  min-width: 0;
  white-space: nowrap;
`;
const RowHeads = styled.div`
  display: grid;
  grid-template-rows: ${ROW_TRACKS};
  background: linear-gradient(90deg, #f8f8f7 50%, #f1f0ef 50%);
  border-right: 1px solid #97938d;
  overflow: hidden;
`;
const RowHead = styled.div<{ $sel: boolean }>`
  display: flex;
  align-items: center;
  justify-content: center;
  min-height: 0;
  border-bottom: 1px solid ${(p) => (p.$sel ? "#d9592a" : "#97938d")};
  background: ${(p) => (p.$sel ? "linear-gradient(90deg,#f8a98b 50%,#f07746 50%)" : "none")};
  color: ${(p) => (p.$sel ? "#fff" : "#4c4c4c")};
  font-weight: ${(p) => (p.$sel ? 700 : 400)};
  font-size: 14px;
  line-height: 16px;
  & > span { margin-bottom: -2px; }
`;
const Cells = styled.div`
  display: grid;
  grid-template-columns: ${COL_TRACKS};
  grid-template-rows: ${ROW_TRACKS};
  background: #fff;
  overflow: hidden;
`;
const ColLine = styled.i<{ $i: number }>`
  grid-column: ${(p) => p.$i};
  grid-row: 1 / -1;
  border-right: 1px solid #c0c0c0;
`;
const RowLine = styled.i<{ $i: number }>`
  grid-row: ${(p) => p.$i};
  grid-column: 1 / -1;
  border-bottom: 1px solid #c0c0c0;
`;
interface CellProps {
  $from: string;
  $to: string;
  $r: number;
  $r2?: number;
  $align?: string;
  $valign?: string;
  $grid?: boolean;
  $head?: boolean;
  $pad?: string;
  $ls?: number;
}
const Cell = styled.div<CellProps>`
  position: relative;
  grid-column: ${(p) => colIndex(p.$from)} / ${(p) => colIndex(p.$to) + 1};
  grid-row: ${(p) => p.$r} / ${(p) => (p.$r2 ?? p.$r) + 1};
  display: flex;
  align-items: ${(p) => p.$valign ?? "center"};
  justify-content: ${(p) => p.$align ?? "flex-start"};
  padding: ${(p) => p.$pad ?? "2px 4px 0"};
  min-width: 0;
  min-height: 0;
  background: ${(p) => (p.$head ? "#d3d3d3" : "#fff")};
  border: solid ${(p) => (p.$grid ? "#000" : "#c0c0c0")};
  border-width: 0 1px ${(p) => (p.$head ? 2 : 1)}px 0;
  box-shadow: ${(p) => (p.$head ? "0 -1px #000, -1px 0 #000" : p.$grid ? "-1px 0 #000" : "none")};
  font-family: ${ARIAL};
  font-size: 19.200px;
  font-weight: ${(p) => (p.$head ? 700 : 400)};
  letter-spacing: ${(p) => p.$ls ?? 0}px;
  line-height: 22px;
  color: #000;
  white-space: pre;
`;
/* Spelling-error squiggle: three one-pixel rows that repeat every 6px. */
const Typo = styled.span<{ $up?: number }>`
  background:
    linear-gradient(90deg, transparent 3px, #f00 3px 5px, transparent 5px) 0 calc(100% - ${(p) => (p.$up ?? 0) + 2}px) / 6px 1px repeat-x,
    linear-gradient(90deg, transparent 2px, #f00 2px 3px, transparent 3px 5px, #f00 5px) 0 calc(100% - ${(p) => (p.$up ?? 0) + 1}px) / 6px 1px repeat-x,
    linear-gradient(90deg, #f00 2px, transparent 2px) 0 calc(100% - ${(p) => p.$up ?? 0}px) / 6px 1px repeat-x;
`;
const Clip = styled.span<{ $l: number; $r: number }>`
  align-self: stretch;
  flex: 1;
  min-width: 0;
  display: flex;
  align-items: center;
  justify-content: center;
  clip-path: inset(0 ${(p) => p.$r}px 0 ${(p) => p.$l}px);
  & > span { flex: none; }
`;
const MarkSvg = styled.svg<{ $right?: boolean }>`
  position: absolute;
  ${(p) => (p.$right ? "right: 0" : "left: 0")};
  top: calc(50% - 7px);
  width: 7px;
  height: 13px;
`;
const Mark = ({ right = false }: { right?: boolean }) => (
  <MarkSvg $right={right} viewBox="0 0 7 13">
    <path d={right ? "M.5 .5v12L6.500 6.500z" : "M6.500 .5v12L.5 6.500z"} fill="#f00" stroke="#000" strokeWidth=".8" />
  </MarkSvg>
);
const Mono = styled.span`
  font-family: ${MONO};
  font-size: 21.600px;
  letter-spacing: 0.040px;
  position: relative;
  top: -1px;
`;
/* The school name straddles rows 1 and 2; each row paints its own half with its own glyph advance. */
const SplitName = styled.span`
  position: relative;
  font-size: 24px;
  line-height: 23px;
  & > span {
    display: block;
    clip-path: inset(11px -6px -8px -6px);
  }
  &::before {
    content: attr(data-name);
    position: absolute;
    left: -3px;
    top: 0;
    letter-spacing: 0.140px;
    clip-path: inset(-10px -6px calc(100% - 11px) -6px);
  }
`;
const SCHOOL = "TRƯỜNG ĐẠI HỌC NGOẠI NGỮ - TIN HỌC TP.HCM";
const Blue = styled.span`
  font-size: 23.200px;
  color: #4169e1;
`;
const Headline = styled.span`
  font-family: "DejaVu Sans", sans-serif;
  font-weight: 700;
  font-size: 36px;
  line-height: 40px;
  letter-spacing: 0.080px;
  color: #4169e1;
`;
const Note = styled.div`
  line-height: 21.300px;
  overflow: hidden;
  height: 51px;
`;

/* Table columns of the timetable: first and last sheet column of each. */
const SPANS: [string, string][] = [
  ["B", "F"], ["G", "L"], ["M", "O"], ["P", "R"], ["S", "U"], ["V", "Y"], ["Z", "Z"], ["AA", "AB"], ["AC", "AC"],
  ["AD", "AD"], ["AE", "AH"], ["AI", "AN"], ["AO", "AU"], ["AV", "BD"],
];
const HEADS: React.ReactNode[] = [
  <span>Mã <Typo>MH</Typo></span>,
  <span>Tên <Typo>MH</Typo></span>,
  "Nhóm",
  <><Clip $l={7} $r={0}><span>Số <Typo>TC</Typo></span></Clip><Mark /></>,
  <><Clip $l={7} $r={6}><span>Số <Typo>TCHP</Typo></span></Clip><Mark /><Mark right /></>,
  "Lớp",
  <><Clip $l={5} $r={6}><span><Typo>TTH</Typo></span></Clip><Mark /><Mark right /></>,
  "Thứ",
  <span><Typo>TBD</Typo></span>,
  <span><Typo>ST</Typo></span>,
  <><Clip $l={4} $r={6}><span>Giờ học</span></Clip><Mark /><Mark right /></>,
  "Phòng",
  "Thời gian học",
  "Ghi chú",
];
const plain = "Các hệ quản trị cơ sở dữ liệu";
const typoed = <span>Các <Typo>côngnghệ</Typo> mới trong <Typo>pháttriển</Typo> <Typo>phầnmềm</Typo></span>;
const klass = (t: string) => <><Clip $l={7} $r={6}><span>{t}</span></Clip><Mark /><Mark right /></>;
const DATA: React.ReactNode[][] = [
  ["1222014", plain, "01", "4", "4.5", klass("PM1601,PM1602"), "02", "3", "10", "3", "", "PM15", <Mono>----5678901234</Mono>, ""],
  ["1250164", typoed, "03", "4", "4.5", klass("PM1603,PM1604"), "01", "3", "7", "3", "", "PM15", <Mono>----5678901234</Mono>, ""],
  ["1222014", plain, "01", "4", "4.5", klass("PM1601,PM1602"), "", "2", "10", "3", "", "B56", <Mono>------7890123456789012</Mono>, ""],
  ["1250164", typoed, "03", "4", "4.5", klass("PM1603,PM1604"), "", "6", "1", "3", "", "B35", <Mono>------7890123456789012</Mono>, ""],
];

const Spreadsheet = () => (
  <SheetBox>
    <Corner />
    <ColHeads>
      {COLS.map(([n, w]) => <ColHead key={n}>{w > 1 && n !== "BG" ? n : ""}</ColHead>)}
    </ColHeads>
    <RowHeads>
      {ROWS.map((h, i) => <RowHead key={i} $sel={i === 24}>{h > 1 && <span>{i + 1}</span>}</RowHead>)}
    </RowHeads>
    <Cells>
      {COLS.slice(0, -1).map((c, i) => <ColLine key={c[0]} $i={i + 1} />)}
      {ROWS.slice(0, -1).map((_, i) => <RowLine key={i} $i={i + 1} />)}
      <Cell $from="F" $to="Q" $r={1} $r2={2} $align="center" $pad="2px 0 0"><SplitName data-name={SCHOOL}><span>{SCHOOL}</span></SplitName></Cell>
      <Cell $from="F" $to="Q" $r={3} $r2={4} $align="center" $pad="0">PHÒNG ĐÀO TẠO</Cell>
      <Cell $from="AR" $to="AT" $r={2} $r2={3} $pad="0 0 3px 4px">Ngày in</Cell>
      <Cell $from="AU" $to="BE" $r={2} $r2={3} $pad="0 0 3px 4px" $ls={0.15}>12/5/2020 10:5</Cell>
      <Cell $from="F" $to="AY" $r={5} $align="center"><Headline>THỜI <Typo $up={4}>KHÓA</Typo> BIỂU</Headline></Cell>
      <Cell $from="T" $to="AF" $r={6} $align="center" $pad="0"><Blue>Học kỳ 2 - Năm học 2019-2020</Blue></Cell>
      <Cell $from="D" $to="G" $r={7}>Mã Số</Cell>
      <Cell $from="I" $to="J" $r={7} $ls={0.2}>16DH110085</Cell>
      <Cell $from="AK" $to="AR" $r={7}>Email :</Cell>
      <Cell $from="AS" $to="BB" $r={7} $ls={0.1}>16dh110085@st.huflit.edu.vn</Cell>
      <Cell $from="D" $to="G" $r={8}>Họ Tên</Cell>
      <Cell $from="I" $to="J" $r={8} $pad="0 4px 4px" $ls={0.18}>Bùi Nguyễn Phú Đăng</Cell>
      <Cell $from="AK" $to="AR" $r={8} $ls={0.1}>Điện Thoại</Cell>
      <Cell $from="AS" $to="BB" $r={8} $pad="0 4px 4px" $ls={0.3}>01699403089</Cell>
      {SPANS.map(([a, b], i) => (
        <Cell key={a} $from={a} $to={b} $r={12} $r2={13} $grid $head $align="center" $pad="0">{HEADS[i]}</Cell>
      ))}
      {DATA.map((row, r) =>
        SPANS.map(([a, b], i) => (
          <Cell key={r + a} $from={a} $to={b} $r={14 + r} $grid $align={i === 1 || i === 12 ? "flex-start" : "center"} $pad={i === 1 || i === 12 ? "2px 4px 0" : "2px 1px 0 0"} $ls={i === 0 ? 0.15 : 0}>
            {row[i]}
          </Cell>
        ))
      )}
      <Cell $from="F" $to="BA" $r={19} $pad="2px 9px 0" $ls={0.07}>Dữ liệu được cập nhật vào lúc: 11:45 Ngày: 9/5/2020</Cell>
      <Cell $from="D" $to="AM" $r={20} $valign="flex-start" $pad="4px 4px 0" $ls={0.05}>
        <Note>{"  Lưu ý: Mỗi ký tự trong dãy tuần 1234567890 đại diện cho 1 tuần lễ, ký tự đầu tiên diễn tả tuần thứ nhất của học kỳ (tuần 1) bắt đầu từ\n03/02/2020\n      Mã MH: Mã Môn Học   NMH: Nhóm Môn Học   STC: Số Tín Chỉ   STCHP: Số Tín Chỉ Học Phí"}</Note>
        <Mark right />
      </Cell>
      <Cell $from="E" $to="AZ" $r={22} $valign="flex-start" $pad="4px 4px 0" $ls={0.07}>
        <span><Typo>SV</Typo> luôn mang theo thời <Typo>khóa</Typo> biểu (đã được xác nhận đầy đủ) khi đi học và xuất trình khi cần giải quyết các quyền lợi liên quan.</span>
      </Cell>
    </Cells>
  </SheetBox>
);

const VScroll = styled.div`
  width: 7px;
  display: flex;
  flex-direction: column;
`;
const SplitKnob = styled.i<{ $w: number; $h: number }>`
  width: ${(p) => p.$w}px;
  height: ${(p) => p.$h}px;
  background: #aeaaa5;
  display: flex;
  align-items: center;
  justify-content: center;
  &::after {
    content: "";
    width: ${(p) => (p.$w > p.$h ? 5 : 1)}px;
    height: ${(p) => (p.$w > p.$h ? 1 : 5)}px;
    background: #000;
  }
`;
const VThumb = styled.i`
  margin-top: 1px;
  height: 404px;
  background: #f28e68;
`;
const HScroll = styled.div`
  height: 7px;
  padding: 0 7px 0 1px;
  display: flex;
  justify-content: space-between;
`;
const HThumb = styled.i`
  width: 893px;
  background: #f28e68;
`;
const Tabs = styled.div`
  height: 20px;
  padding-left: 9px;
  display: flex;
  align-items: center;
`;
const TabNav = styled.svg`
  width: 109px;
  height: 20px;
`;
const Tab = styled.span`
  width: 63px;
  height: 20px;
  background: #fff;
  border: solid #97938d;
  border-width: 0 1px 1px;
  font-size: 13px;
  font-weight: 700;
  letter-spacing: -0.500px;
  line-height: 18px;
  text-align: center;
`;

/* ---------- sidebar and status bar ---------- */

const Sidebar = styled.aside`
  width: 47px;
  display: flex;
  height: 900px;
  border: solid #b0aca7;
  border-width: 1px 0 1px 1px;
`;
const Grip = styled.div`
  width: 7px;
  border-right: 1px solid #b0aca7;
  padding-top: 413px;
`;
const GripHandle = styled.div`
  width: 7px;
  margin-left: -1px;
  height: 73px;
  background: #98948f;
  display: flex;
  align-items: center;
  justify-content: flex-end;
  &::after {
    content: "";
    border: solid transparent;
    border-width: 4px 0 4px 6px;
    border-left-color: #fff;
  }
`;
const SideTabs = styled.div`
  flex: 1;
  display: flex;
  flex-direction: column;
  align-items: center;
  padding-top: 7px;
`;
const SideTab = styled.div<{ $h: number; $boxed?: boolean }>`
  width: 32px;
  height: ${(p) => p.$h}px;
  display: flex;
  align-items: center;
  justify-content: center;
  border-radius: 4px;
  border: 1px solid ${(p) => (p.$boxed ? "#b5b1ac" : "transparent")};
`;
const SideRule = styled.i`
  width: 22px;
  height: 1px;
  margin: 6px 0 4px;
  background: #dcd9d6;
`;
const Status = styled.footer`
  height: 21px;
  border-top: 1px solid #a9a5a0;
  display: flex;
  align-items: center;
  font-size: 12.500px;
  letter-spacing: -0.250px;
`;
const Field = styled.span<{ $w: number; $align?: string; $pl?: number; $last?: boolean }>`
  width: ${(p) => p.$w}px;
  height: 16px;
  display: flex;
  align-items: center;
  justify-content: ${(p) => p.$align ?? "flex-start"};
  padding-left: ${(p) => p.$pl ?? 0}px;
  border-right: ${(p) => (p.$last ? "none" : "1px solid #a09c97")};
  white-space: pre;
`;

const MENUS: [string, number, number][] = [
  ["Tập tin", 59, 0.3], ["Sửa", 37, 0], ["Xem", 42, 0], ["Chèn", 45, 0], ["Định dạng", 80, 0], ["Styles", 53, 0.25], ["Trang tính", 77, -0.1],
  ["Dữ liệu", 61, 0.3], ["Công cụ", 65, 0], ["Cửa sổ", 57, 0], ["Trợ giúp", 60, 0.1],
];
const DOCK: [string, boolean][] = [
  ["firefox", false], ["thunderbird", false], ["files", true], ["rhythmbox", false], ["impress", false], ["software", false],
  ["chrome", false], ["phpstorm", true], ["telegram", false], ["terminator", true], ["workbench", true], ["calcdock", true],
];

const TrayIcons = () => (
  <svg width="104" height="20" viewBox="0 0 104 20" fill="#dfdbd2" stroke="none">
    <path d="M5 3h5v5H5zM0 12.500h5v5H0zM10 12.500h5v5h-5z" />
    <path d="M7.500 7v3M2.500 13v-3h10v3" fill="none" stroke="#dfdbd2" strokeWidth="1.300" />
    <path d="M29 9h5l-3-6h2l5 6h3.500c2 0 2 2.500 0 2.500H38l-5 6h-2l3-6h-5l-1.500 2H29l.5-3-.5-3h1z" />
    <path d="M56 7.500h3.500l4-4.500v14l-4-4.500H56z" />
    <path d="M65.500 7v6M68 5v8M70.500 4v7" stroke="#8d8a83" strokeWidth="1.300" />
    <path d="M68 14l4 4M72 14l-4 4" stroke="#dfdbd2" strokeWidth="1.600" />
    <path d="M86.500 4.500h10v13h-10zM89 3h5M89 8h5M89 11h5M89 14h3" fill="none" stroke="#dfdbd2" strokeWidth="1.700" />
    <path d="M98 9l-5 6h3l-1 4 5-6h-3z" />
  </svg>
);

export default function App() {
  return (
    <Screen>
      <GlobalStyle />
      <TopBar>
        <TopLeft>
          <span>Hoạt động</span>
          <Icon name="calc" size={16} />
          <span>LibreOffice Calc</span>
          <Caret $w={9} $h={5} $c="#dfdbd2" />
        </TopLeft>
        <Clock>T3 12:30</Clock>
        <TopRight>
          <Icon name="telegram" size={20} />
          <Tray $ml={28}>
            <svg width="16" height="14" viewBox="0 0 16 14">
              <path d="M1 0h14v11l1 3H0l1-3z" fill="#dfdbd2" />
              <path d="M3 3.500h2M6 3.500h7M3 6.500h2M6 6.500h7M3 9.500h2M6 9.500h7" stroke="#4a4842" />
            </svg>
          </Tray>
          <Tray $ml={27}>
            <span>en</span>
            <Caret $w={9} $h={5} $c="#dfdbd2" />
          </Tray>
          <Tray $ml={32}>
            <TrayIcons />
            <Caret $w={9} $h={5} $c="#dfdbd2" />
          </Tray>
        </TopRight>
      </TopBar>
      <Body>
        <Dock>
          {DOCK.map(([n, run], i) => (
            <DockItem key={n}>
              <Dot $on={run} />
              <DockTile $active={i === 11}><Icon name={n} size={24} /></DockTile>
            </DockItem>
          ))}
          <AppGrid>{Array.from({ length: 9 }, (_, i) => <i key={i} />)}</AppGrid>
        </Dock>
        <Window>
          <TitleBar>
            <Title>Report.xls - LibreOffice Calc</Title>
            <WinButtons>
              {["M4 8.500h8", "M4.500 5.500h7v5h-7z", "M5.500 5.500l5 5M10.500 5.500l-5 5"].map((d, i) => (
                <WinButton key={d} $close={i === 2}>
                  <svg width="16" height="16" viewBox="0 0 16 16" fill="none" stroke="#33322e"><path d={d} strokeWidth={i === 2 ? 1.5 : 1} /></svg>
                </WinButton>
              ))}
            </WinButtons>
          </TitleBar>
          <MenuBar>
            {MENUS.map(([t, w, ls]) => <MenuItem key={t} $w={w} $ls={ls}>{t}</MenuItem>)}
            <CloseDoc>
              <svg width="6" height="6" viewBox="0 0 6 6"><path d="M.5 .5l5 5M5.500 .5l-5 5" stroke="#444" strokeWidth="1.200" /></svg>
            </CloseDoc>
          </MenuBar>
          <Toolbar $h={38}>
            <Handle $mr={3.5} />
            <Tools items={ROW1} />
          </Toolbar>
          <Toolbar $h={40}>
            <Handle $mr={6} />
            <Combo $w={142} $italic>Arial<ComboArrow><Caret $w={10} $h={6} $c="#111" /></ComboArrow></Combo>
            <Gap $w={10} />
            <Combo $w={71}>10<ComboArrow><Caret $w={10} $h={6} $c="#111" /></ComboArrow></Combo>
            <Tools items={[8.5, ...ROW2]} />
          </Toolbar>
          <Work>
            <Main>
              <FormulaBar>
                <Combo $w={155}>BL25<ComboArrow><Caret $w={10} $h={6} $c="#111" /></ComboArrow></Combo>
                <SepSlot $w={9} />
                <MiniSlot><Icon name="fx" size={20} /></MiniSlot>
                <MiniSlot><Icon name="sigma" size={22} /></MiniSlot>
                <MiniSlot><Icon name="equals" size={22} /></MiniSlot>
                <SepSlot $w={9} />
                <FormulaInput />
                <FormulaDrop><Caret $w={10} $h={6} $c="#333" /></FormulaDrop>
              </FormulaBar>
              <SheetArea>
                <Spreadsheet />
                <VScroll>
                  <SplitKnob $w={7} $h={6} />
                  <VThumb />
                </VScroll>
              </SheetArea>
              <HScroll>
                <HThumb />
                <SplitKnob $w={5} $h={7} />
              </HScroll>
              <Tabs>
                <TabNav viewBox="0 0 109 20" fill="#b0aca7">
                  <path d="M4 4h1.500v11H4zM12 4v11L6 9.500zM30 4v11l-6-5.500zM43 4v11l6-5.500zM62 4v11l6-5.500zM68 4h1.500v11H68z" />
                  <path d="M91 4h4v4h4v4h-4v4h-4v-4h-4V8h4z" fill="#3c3c3c" />
                </TabNav>
                <Tab>Page 1</Tab>
              </Tabs>
            </Main>
            <Sidebar>
              <Grip><GripHandle /></Grip>
              <SideTabs>
                <SideTab $h={24}><Icon name="sidemenu" /></SideTab>
                <SideRule />
                <SideTab $h={32} $boxed><Icon name="wrench" /></SideTab>
                <SideTab $h={40}><Icon name="styles" size={23} /></SideTab>
                <SideTab $h={27}><Icon name="gallery" size={22} /></SideTab>
                <SideTab $h={44}><Icon name="compass" size={22} /></SideTab>
                <SideTab $h={26}><Icon name="fx" size={22} /></SideTab>
              </SideTabs>
            </Sidebar>
          </Work>
          <Status>
            <Field $w={297} $pl={10}>Sheet 1 of 1</Field>
            <Field $w={294}> </Field>
            <Field $w={333} $pl={8}>PageStyle_Page 1</Field>
            <Field $w={327} $pl={119}>Việt</Field>
            <Field $w={29} $align="center">
              <svg width="14" height="12" viewBox="0 0 14 12"><path d="M1 3h8v7H1z" fill="#97938d" /><path d="M10 .5h3M10 11.500h3M11.500 1v10" stroke="#97938d" /></svg>
            </Field>
            <Field $w={29} $align="center">
              <svg width="12" height="13" viewBox="0 0 12 13" fill="none" stroke="#97938d"><path d="M9.500 5V1.500h-8v11h8V10" /><path d="M4.500 6.500l2 3 5-5" strokeWidth="1.500" /></svg>
            </Field>
            <Field $w={29}> </Field>
            <Field $w={348} $align="center">Trung bình: ; Tổng: 0</Field>
            <Field $w={143}>
              <svg width="142" height="16" viewBox="0 0 142 16">
                <path d="M11 7h8v2h-8zM127 7h8v2h-8zM130 4h2v8h-2z" fill="#8a8680" />
                <path d="M24 7h97v2H24zM71 2h2v12h-2z" fill="#b5b1ac" />
                <circle cx="84" cy="8" r="3.500" fill="#fff" stroke="#8a8680" />
              </svg>
            </Field>
            <Field $w={48} $pl={8} $last>180%</Field>
          </Status>
        </Window>
      </Body>
    </Screen>
  );
}
